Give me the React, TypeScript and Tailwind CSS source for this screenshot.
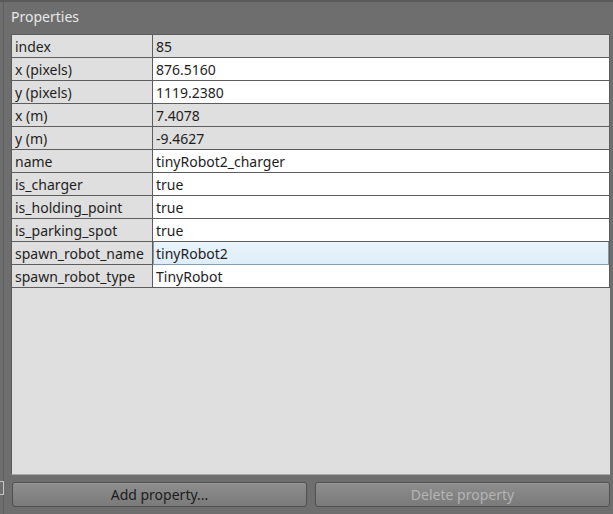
const rows: { key: string; value: string; editable: boolean; selected?: boolean }[] = [
  { key: 'index', value: '85', editable: false },
  { key: 'x (pixels)', value: '876.5160', editable: true },
  { key: 'y (pixels)', value: '1119.2380', editable: true },
  { key: 'x (m)', value: '7.4078', editable: false },
  { key: 'y (m)', value: '-9.4627', editable: false },
  { key: 'name', value: 'tinyRobot2_charger', editable: true },
  { key: 'is_charger', value: 'true', editable: true },
  { key: 'is_holding_point', value: 'true', editable: true },
  { key: 'is_parking_spot', value: 'true', editable: true },
  { key: 'spawn_robot_name', value: 'tinyRobot2', editable: true, selected: true },
  { key: 'spawn_robot_type', value: 'TinyRobot', editable: true },
];

export default function App() {
  return (
    <div
      className="relative flex h-[514px] w-[613px] flex-col overflow-hidden border-t-2 border-[#5a5a5a] bg-[#6e6e6e] text-[14px]"
      style={{ fontFamily: '"Noto Sans", "DejaVu Sans", sans-serif' }}
    >
      {/* edge of the neighbouring widget */}
      <div className="absolute left-0 top-[479px] h-[14px] w-[4px] border border-l-0 border-[#c8c8c8]" />
      <div className="ml-[3px] flex flex-1 flex-col border-l border-[#5e5e5e]">
        <div className="h-[32px] pl-[7px] pt-[5px] text-[14px] leading-[20px] text-[#e8e8e8]">Properties</div>
        <div className="ml-[7px] mr-[3px] flex h-[441px] flex-col border-b border-l border-[#a9a9a9] border-l-[#5a5a5a] bg-[#dfdfdf]">
          <div className="grid grid-cols-[141px_1fr] border-t border-r border-[#5d5d5d]">
            {rows.map((r) => (
              <div key={r.key} className="contents">
                <div className="flex h-[23px] items-center border-b border-r border-[#5d5d5d] bg-[#dfdfdf] pl-[3px] text-[#1e1e1e]">
                  {r.key}
                </div>
                <div
                  className={
                    r.selected
                      ? 'flex h-[23px] items-center border border-t-0 border-[#8a9ba8] bg-gradient-to-b from-[#eaf5fd] to-[#deedf8] pl-[2px] text-[#1e1e1e]'
                      : r.editable
                      ? 'flex h-[23px] items-center border-b border-[#5d5d5d] bg-white pl-[3px] text-[#1e1e1e]'
                      : 'flex h-[23px] items-center border-b border-[#5d5d5d] bg-[#dfdfdf] pl-[3px] text-[#1e1e1e]'
                  }
                >
                  {r.value}
                </div>
              </div>
            ))}
          </div>
        </div>
        <div className="ml-[8px] mr-[3px] mt-[7px] flex gap-[8px]">
          <button className="h-[25px] flex-1 rounded-[3px] border border-[#4f4f4f] bg-gradient-to-b from-[#8e8e8e] to-[#7a7a7a] text-[14px] text-[#1c1c1c] shadow-[inset_0_1px_0_#9a9a9a]">
            Add property...
          </button>
          <button className="h-[25px] flex-1 rounded-[3px] border border-[#4f4f4f] bg-gradient-to-b from-[#8e8e8e] to-[#7a7a7a] text-[14px] text-[#b4b4b4] shadow-[inset_0_1px_0_#9a9a9a]">
            Delete property
          </button>
        </div>
      </div>
    </div>
  );
}
